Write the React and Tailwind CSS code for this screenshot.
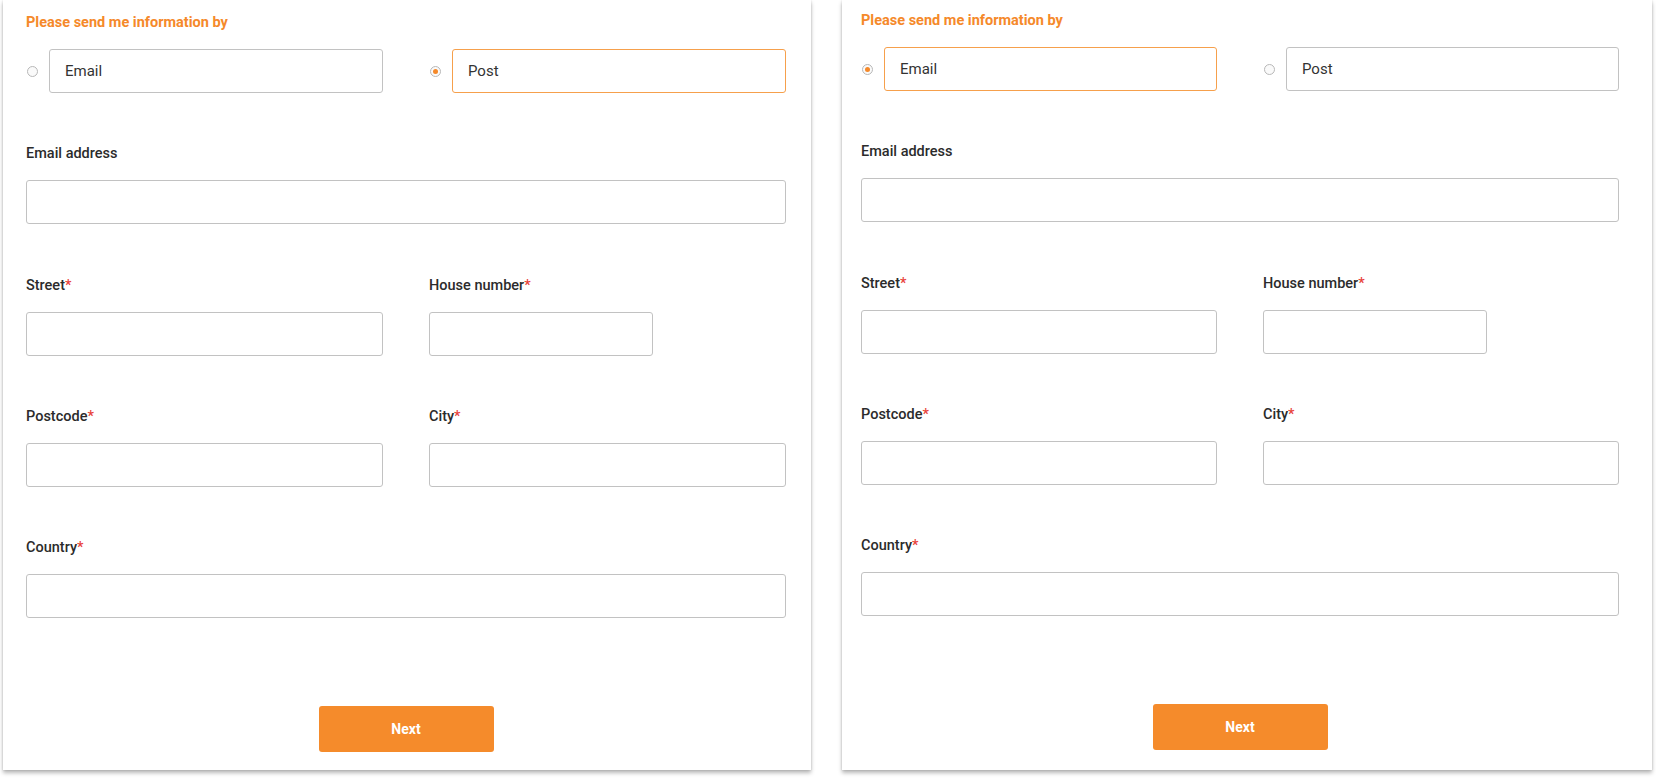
import React from "react";

function Radio({ checked }) {
  return (
    <span className="ml-px flex h-[11px] w-[11px] shrink-0 items-center justify-center rounded-full border border-[#b8b8b8] bg-[#fafafa]">
      {checked && <span className="h-[5px] w-[5px] rounded-full bg-[#f5892a]" />}
    </span>
  );
}

function Choice({ label, checked }) {
  return (
    <div className="flex items-center gap-[11px]">
      <Radio checked={checked} />
      <div
        className={
          "flex h-[44px] flex-1 items-center rounded-[3px] border px-[15px] text-[15px] text-[#333] " +
          (checked ? "border-[#f6a04c]" : "border-[#c2c2c2]")
        }
      >
        {label}
      </div>
    </div>
  );
}

function Label({ children, req }) {
  return (
    <div className="mb-[16px] h-[20px] text-[14.5px] font-medium leading-[20px] text-[#2b2b2b]">
      {children}
      {req && <span className="text-[#e8423a]">*</span>}
    </div>
  );
}

function Input({ className = "" }) {
  return <div className={"h-[44px] rounded-[3px] border border-[#c2c2c2] bg-white " + className} />;
}

function Card({ emailChecked, className }) {
  return (
    <div className={"flex h-[770px] flex-col bg-white shadow-[0_3px_4px_rgba(0,0,0,0.28),0_0_2px_rgba(0,0,0,0.14)] " + className}>
      <div className="h-[20px] text-[14.5px] font-bold leading-[20px] text-[#f5892a]">
        Please send me information by
      </div>
      <div className="mt-[16px] grid grid-cols-2 gap-x-[46px]">
        <Choice label="Email" checked={emailChecked} />
        <Choice label="Post" checked={!emailChecked} />
      </div>

      <div className="mt-[51px]">
        <Label>Email address</Label>
        <Input />
      </div>

      <div className="mt-[52px] grid grid-cols-2 gap-x-[46px]">
        <div>
          <Label req>Street</Label>
          <Input />
        </div>
        <div>
          <Label req>House number</Label>
          <Input className="w-[224px]" />
        </div>
      </div>

      <div className="mt-[51px] grid grid-cols-2 gap-x-[46px]">
        <div>
          <Label req>Postcode</Label>
          <Input />
        </div>
        <div>
          <Label req>City</Label>
          <Input />
        </div>
      </div>

      <div className="mt-[51px]">
        <Label req>Country</Label>
        <Input />
      </div>

      <div className="mt-[88px] flex justify-center">
        <button className="h-[46px] w-[175px] rounded-[3px] bg-[#f58b2b] text-[14px] font-bold text-white">
          Next
        </button>
      </div>
    </div>
  );
}

export default function App() {
  return (
    <div
      className="flex h-[778px] w-[1656px] gap-[31px] bg-white pl-[3px]"
      style={{ fontFamily: "Roboto, 'Liberation Sans', sans-serif" }}
    >
      <Card emailChecked={false} className="w-[808px] pl-[23px] pr-[25px] pt-[13px]" />
      <Card emailChecked={true} className="w-[810px] pl-[19px] pr-[33px] pt-[11px]" />
    </div>
  );
}
